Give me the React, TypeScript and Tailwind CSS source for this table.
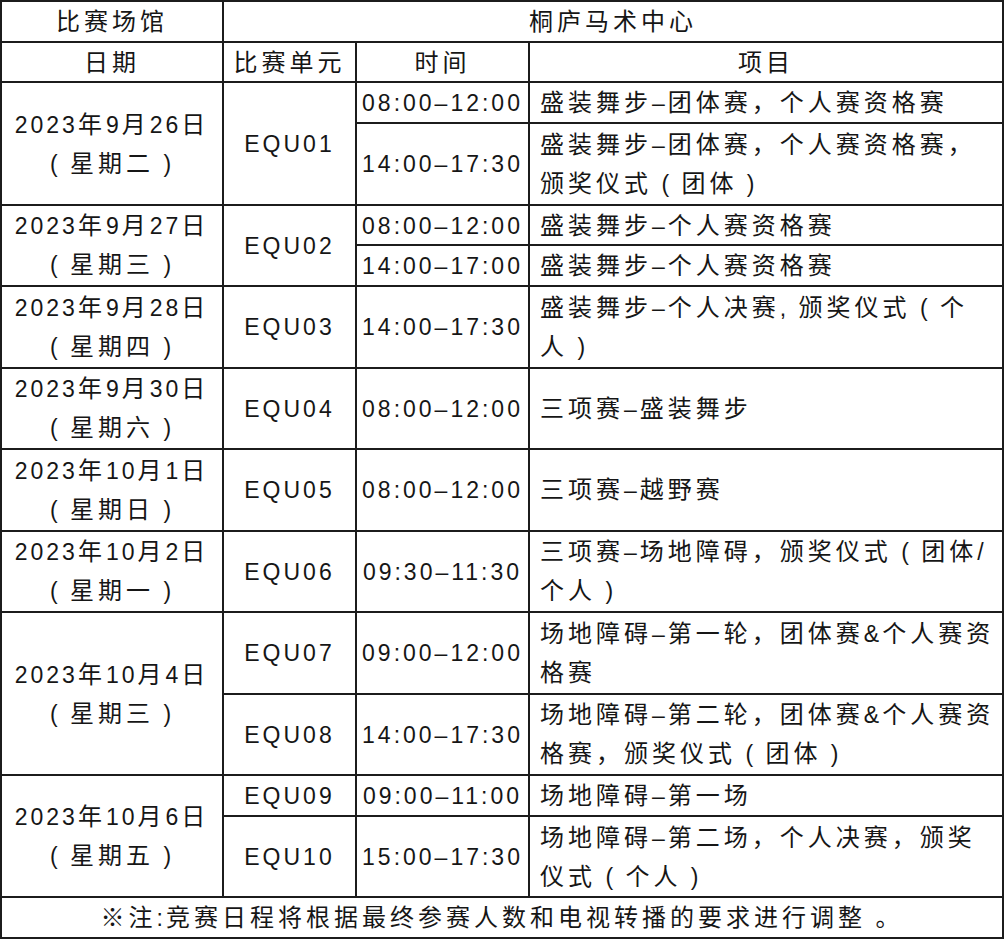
const font = {
  fontFamily: '"Liberation Sans", "Noto Sans CJK SC", sans-serif',
};

const CJK = /([\u3000-\u303f\u4e00-\u9fff\uff01-\uff60※]+)/;

// 中文字和数字/字母字距不同，分开包起来
function Txt({ lines }: { lines: string[] }) {
  return (
    <>
      {lines.map((line, i) => (
        <div key={i}>
          {line.split(CJK).map((part, j) =>
            part === "" ? null : CJK.test(part) ? (
              <span key={j} className="text-[24px] tracking-[4px]">
                {part}
              </span>
            ) : (
              <span key={j} className="text-[23px] tracking-[3px]">
                {part}
              </span>
            )
          )}
        </div>
      ))}
    </>
  );
}

interface CellProps {
  className: string;
  lines: string[];
  left?: boolean;
}

function Cell({ className, lines, left }: CellProps) {
  return (
    <div
      className={`bg-white flex flex-col justify-center pt-[4px] leading-[36px] whitespace-pre ${
        left ? "items-start pl-[10px]" : "items-center"
      } ${className}`}
    >
      <Txt lines={lines} />
    </div>
  );
}

export default function App() {
  return (
    <div className="w-[1005px] h-[940px] bg-white" style={font}>
      <div className="grid w-[1004px] h-[939px] bg-[#1c1c1c] p-[2px] gap-[2px] grid-cols-[220px_131px_171px_1fr] grid-rows-23 text-[#161616]">
        {/* 表头 */}
        <Cell className="row-start-1 col-start-1" lines={["比赛场馆"]} />
        <Cell className="row-start-1 col-start-2 col-span-3" lines={["桐庐马术中心"]} />
        <Cell className="row-start-2 col-start-1" lines={["日期"]} />
        <Cell className="row-start-2 col-start-2" lines={["比赛单元"]} />
        <Cell className="row-start-2 col-start-3" lines={["时间"]} />
        <Cell className="row-start-2 col-start-4" lines={["项目"]} />

        {/* 9月26日 */}
        <Cell className="row-start-3 row-span-3 col-start-1" lines={["2023年9月26日", "( 星期二 )"]} />
        <Cell className="row-start-3 row-span-3 col-start-2" lines={["EQU01"]} />
        <Cell className="row-start-3 col-start-3" lines={["08:00–12:00"]} />
        <Cell left className="row-start-3 col-start-4" lines={["盛装舞步–团体赛，个人赛资格赛"]} />
        <Cell className="row-start-4 row-span-2 col-start-3" lines={["14:00–17:30"]} />
        <Cell
          left
          className="row-start-4 row-span-2 col-start-4"
          lines={["盛装舞步–团体赛，个人赛资格赛，", "颁奖仪式 ( 团体 )"]}
        />

        {/* 9月27日 */}
        <Cell className="row-start-6 row-span-2 col-start-1" lines={["2023年9月27日", "( 星期三 )"]} />
        <Cell className="row-start-6 row-span-2 col-start-2" lines={["EQU02"]} />
        <Cell className="row-start-6 col-start-3" lines={["08:00–12:00"]} />
        <Cell left className="row-start-6 col-start-4" lines={["盛装舞步–个人赛资格赛"]} />
        <Cell className="row-start-7 col-start-3" lines={["14:00–17:00"]} />
        <Cell left className="row-start-7 col-start-4" lines={["盛装舞步–个人赛资格赛"]} />

        {/* 9月28日 */}
        <Cell className="row-start-8 row-span-2 col-start-1" lines={["2023年9月28日", "( 星期四 )"]} />
        <Cell className="row-start-8 row-span-2 col-start-2" lines={["EQU03"]} />
        <Cell className="row-start-8 row-span-2 col-start-3" lines={["14:00–17:30"]} />
        <Cell
          left
          className="row-start-8 row-span-2 col-start-4"
          lines={["盛装舞步–个人决赛, 颁奖仪式 ( 个", "人 )"]}
        />

        {/* 9月30日 */}
        <Cell className="row-start-10 row-span-2 col-start-1" lines={["2023年9月30日", "( 星期六 )"]} />
        <Cell className="row-start-10 row-span-2 col-start-2" lines={["EQU04"]} />
        <Cell className="row-start-10 row-span-2 col-start-3" lines={["08:00–12:00"]} />
        <Cell left className="row-start-10 row-span-2 col-start-4" lines={["三项赛–盛装舞步"]} />

        {/* 10月1日 */}
        <Cell className="row-start-12 row-span-2 col-start-1" lines={["2023年10月1日", "( 星期日 )"]} />
        <Cell className="row-start-12 row-span-2 col-start-2" lines={["EQU05"]} />
        <Cell className="row-start-12 row-span-2 col-start-3" lines={["08:00–12:00"]} />
        <Cell left className="row-start-12 row-span-2 col-start-4" lines={["三项赛–越野赛"]} />

        {/* 10月2日 */}
        <Cell className="row-start-14 row-span-2 col-start-1" lines={["2023年10月2日", "( 星期一 )"]} />
        <Cell className="row-start-14 row-span-2 col-start-2" lines={["EQU06"]} />
        <Cell className="row-start-14 row-span-2 col-start-3" lines={["09:30–11:30"]} />
        <Cell
          left
          className="row-start-14 row-span-2 col-start-4"
          lines={["三项赛–场地障碍，颁奖仪式 ( 团体/", "个人 )"]}
        />

        {/* 10月4日 */}
        <Cell className="row-start-16 row-span-4 col-start-1" lines={["2023年10月4日", "( 星期三 )"]} />
        <Cell className="row-start-16 row-span-2 col-start-2" lines={["EQU07"]} />
        <Cell className="row-start-16 row-span-2 col-start-3" lines={["09:00–12:00"]} />
        <Cell
          left
          className="row-start-16 row-span-2 col-start-4"
          lines={["场地障碍–第一轮，团体赛&个人赛资", "格赛"]}
        />
        <Cell className="row-start-18 row-span-2 col-start-2" lines={["EQU08"]} />
        <Cell className="row-start-18 row-span-2 col-start-3" lines={["14:00–17:30"]} />
        <Cell
          left
          className="row-start-18 row-span-2 col-start-4"
          lines={["场地障碍–第二轮，团体赛&个人赛资", "格赛，颁奖仪式 ( 团体 )"]}
        />

        {/* 10月6日 */}
        <Cell className="row-start-20 row-span-3 col-start-1" lines={["2023年10月6日", "( 星期五 )"]} />
        <Cell className="row-start-20 col-start-2" lines={["EQU09"]} />
        <Cell className="row-start-20 col-start-3" lines={["09:00–11:00"]} />
        <Cell left className="row-start-20 col-start-4" lines={["场地障碍–第一场"]} />
        <Cell className="row-start-21 row-span-2 col-start-2" lines={["EQU10"]} />
        <Cell className="row-start-21 row-span-2 col-start-3" lines={["15:00–17:30"]} />
        <Cell
          left
          className="row-start-21 row-span-2 col-start-4"
          lines={["场地障碍–第二场，个人决赛，颁奖", "仪式 ( 个人 )"]}
        />

        {/* 备注 */}
        <Cell
          className="row-start-23 col-start-1 col-span-4"
          lines={["※注:竞赛日程将根据最终参赛人数和电视转播的要求进行调整 。"]}
        />
      </div>
    </div>
  );
}
